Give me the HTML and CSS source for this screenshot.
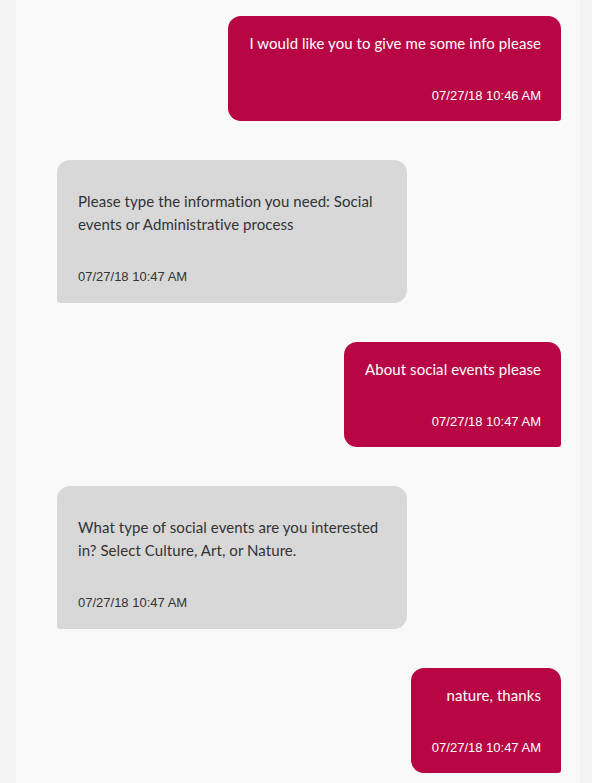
FILE: index.html
```html
<!DOCTYPE html>
<html lang="en">
<head>
<meta charset="utf-8">
<title>Chat</title>
<link rel="stylesheet" href="styles.css">
</head>
<body>
<div class="panel">
  <div class="msg msg-user">
    <div class="bubble">
      <p class="text">I would like you to give me some info please</p>
      <p class="time">07/27/18 10:46 AM</p>
    </div>
  </div>
  <div class="msg msg-bot">
    <div class="bubble">
      <p class="text">Please type the information you need: Social events or Administrative process</p>
      <p class="time">07/27/18 10:47 AM</p>
    </div>
  </div>
  <div class="msg msg-user">
    <div class="bubble">
      <p class="text">About social events please</p>
      <p class="time">07/27/18 10:47 AM</p>
    </div>
  </div>
  <div class="msg msg-bot">
    <div class="bubble">
      <p class="text">What type of social events are you interested in? Select Culture, Art, or Nature.</p>
      <p class="time">07/27/18 10:47 AM</p>
    </div>
  </div>
  <div class="msg msg-user">
    <div class="bubble">
      <p class="text">nature, thanks</p>
      <p class="time">07/27/18 10:47 AM</p>
    </div>
  </div>
</div>
</body>
</html>
```

FILE: styles.css
```css
html, body {
  margin: 0;
  padding: 0;
  background: #f3f3f3;
}
body {
  padding: 0 12px 0 16px;
}
.panel {
  background: #f9f9f9;
  min-height: 783px;
  padding: 16px 19px 0 41px;
  box-sizing: border-box;
  display: flex;
  flex-direction: column;
  gap: 39px;
}
.msg {
  display: flex;
}
.msg-user {
  justify-content: flex-end;
}
.msg-bot {
  justify-content: flex-start;
}
.bubble {
  box-sizing: border-box;
  padding: 16px 20px 17px 21px;
}
.msg-user .bubble {
  background: #b80645;
  color: #ffffff;
  border-radius: 13px 13px 3px 13px;
  text-align: right;
}
.msg-bot .bubble {
  background: #d8d8d8;
  color: #333333;
  border-radius: 13px 13px 13px 3px;
  width: 350px;
  padding-top: 30px;
  padding-bottom: 18px;
}
.text {
  margin: 0;
  font-family: Lato, "Noto Sans", sans-serif;
  font-size: 15px;
  line-height: 23px;
  letter-spacing: 0.07px;
}
.time {
  margin: 33px 0 0;
  font-family: "Liberation Sans", Arial, sans-serif;
  font-size: 13px;
  line-height: 16px;
}
```
